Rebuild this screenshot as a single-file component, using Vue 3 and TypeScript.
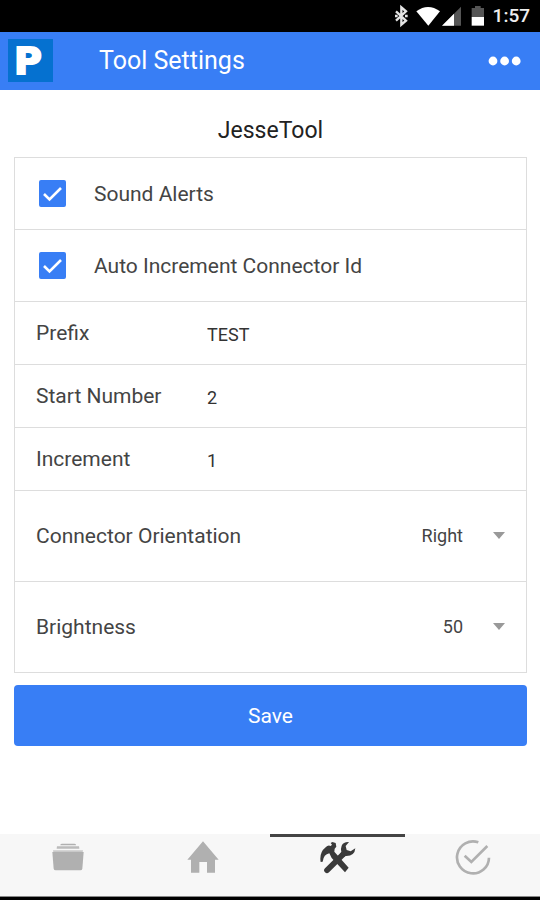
<script setup lang="ts">
import { reactive, ref } from 'vue'

interface Settings {
  sound: boolean
  autoIncrement: boolean
  prefix: string
  start: string
  increment: string
  orientation: string
  brightness: string
}

const settings = reactive<Settings>({
  sound: true,
  autoIncrement: true,
  prefix: 'TEST',
  start: '2',
  increment: '1',
  orientation: 'Right',
  brightness: '50',
})

const toggles: { key: 'sound' | 'autoIncrement'; label: string }[] = [
  { key: 'sound', label: 'Sound Alerts' },
  { key: 'autoIncrement', label: 'Auto Increment Connector Id' },
]
const fields: { key: 'prefix' | 'start' | 'increment'; label: string }[] = [
  { key: 'prefix', label: 'Prefix' },
  { key: 'start', label: 'Start Number' },
  { key: 'increment', label: 'Increment' },
]
const choices: { key: 'orientation' | 'brightness'; label: string; options: string[] }[] = [
  { key: 'orientation', label: 'Connector Orientation', options: ['Right', 'Left'] },
  { key: 'brightness', label: 'Brightness', options: ['25', '50', '75', '100'] },
]

const tabs = ['Files', 'Home', 'Tools', 'Done'] as const
const activeTab = ref<string>('Tools')
</script>

<template>
  <div class="screen">
    <div class="status">
      <svg class="status-icons" viewBox="0 0 321 96" width="107" height="32" aria-hidden="true">
        <path
          d="M48 34L78 62L64 74V22L78 34L48 62"
          fill="none"
          stroke="#e4e4e4"
          stroke-width="7"
        />
        <path d="M45 44h8v8h-8z M75 44h8v8h-8z" fill="#e4e4e4" />
        <path d="M109 34Q144 8 180 34L145 77Z" fill="#fff" />
        <path d="M243 20V77H186Z" fill="#555" />
        <path d="M222 41V77H186Z" fill="#fff" />
        <path d="M275 24h10v-6h17v6h10v27h-37z" fill="#555" />
        <path d="M275 51h37v26h-37z" fill="#fff" />
      </svg>
      <span class="clock">1:57</span>
    </div>

    <header class="toolbar">
      <svg class="logo" viewBox="0 0 45 43" width="45" height="43" aria-hidden="true">
        <rect width="45" height="43" fill="#0571d0" />
        <text x="6" y="35" class="logo-letter">P</text>
      </svg>
      <h1 class="heading">Tool Settings</h1>
      <button class="more" type="button" aria-label="More">
        <svg viewBox="0 0 33 12" width="33" height="12">
          <g fill="#fff">
            <circle cx="5" cy="6" r="4.4" />
            <circle cx="16.6" cy="6" r="4.4" />
            <circle cx="28.2" cy="6" r="4.4" />
          </g>
        </svg>
      </button>
    </header>

    <main class="content">
      <h2 class="tool-name">JesseTool</h2>
      <form class="form" @submit.prevent>
        <div class="panel">
          <label v-for="t in toggles" :key="t.key" class="row toggle">
            <span class="box">
              <input v-model="settings[t.key]" type="checkbox" class="check" />
              <svg v-if="settings[t.key]" class="tick" viewBox="0 0 27 27" width="27" height="27">
                <path d="M5 14L10.5 19.5L22 8" fill="none" stroke="#fff" stroke-width="2.6" />
              </svg>
            </span>
            <span>{{ t.label }}</span>
          </label>

          <div v-for="f in fields" :key="f.key" class="row field">
            <label :for="f.key">{{ f.label }}</label>
            <input :id="f.key" v-model="settings[f.key]" type="text" class="entry" />
          </div>

          <div v-for="c in choices" :key="c.key" class="row choice">
            <label :for="c.key">{{ c.label }}</label>
            <span class="picker">
              <select :id="c.key" v-model="settings[c.key]" class="select">
                <option v-for="o in c.options" :key="o">{{ o }}</option>
              </select>
              <svg class="caret" viewBox="0 0 14 8" width="14" height="8">
                <path d="M1 0H13L7 7Z" fill="#999" />
              </svg>
            </span>
          </div>
        </div>
        <button class="save" type="submit">Save</button>
      </form>
    </main>

    <nav class="tabs">
      <button
        v-for="tab in tabs"
        :key="tab"
        type="button"
        class="tab"
        :class="{ active: tab === activeTab }"
        :aria-label="tab"
        @click="activeTab = tab"
      >
        <svg v-if="tab === 'Files'" viewBox="0 0 108 108" width="36" height="36">
          <g fill="currentColor">
            <path d="M31 14Q32 11 36 11H73Q77 11 78 14V16H31z" />
            <path d="M21 19H87L88 26H20z" opacity=".85" />
            <path d="M9 31H99L98 36H10z" opacity=".65" />
            <path d="M7 36H101L97 86Q96 91 91 91H17Q12 91 11 86Z" />
          </g>
        </svg>
        <svg v-else-if="tab === 'Home'" viewBox="0 0 108 108" width="36" height="36">
          <path
            d="M54 4L101 59H90V98H66V66H43V98H18V59H7L54 4Z"
            fill="currentColor"
          />
        </svg>
        <svg v-else-if="tab === 'Tools'" viewBox="182 44 108 108" width="36" height="36">
          <path d="M203 135L250 88" stroke="currentColor" stroke-width="17" stroke-linecap="round" />
          <path
            d="M269 50Q252 49 247 61Q243 71 246 80L242 85L253 96L259 92Q286 93 288 69L274 78L262 74L259 62Z"
            fill="currentColor"
          />
          <path
            d="M184 110Q179 82 199 66Q206 58 214 62L218 58L214 53L219 50L229 53L231 64L226 70L225 79L268 127L257 141L217 98L210 84Q193 87 190 109Z"
            fill="currentColor"
          />
        </svg>
        <svg v-else viewBox="586 44 108 108" width="36" height="36">
          <g fill="none" stroke="currentColor" stroke-width="8">
            <path d="M656 51A48 48 0 1 0 688 97" />
            <path d="M615 91L635 110L683 62" />
          </g>
        </svg>
      </button>
    </nav>
  </div>
</template>

<style>
body {
  margin: 0;
  background: #fff;
}
</style>

<style scoped>
.screen {
  box-sizing: border-box;
  display: flex;
  flex-direction: column;
  min-height: 100vh;
  border-bottom: 3px solid #000;
  font-family: Roboto, "Liberation Sans", sans-serif;
  color: #444;
}
button,
input,
select {
  font-family: inherit;
  margin: 0;
}
.status {
  display: flex;
  align-items: center;
  justify-content: flex-end;
  gap: 6px;
  height: 32px;
  padding-right: 10px;
  background: #000;
}
.clock {
  color: #eee;
  font-size: 19px;
  font-weight: 500;
  line-height: 32px;
}
.toolbar {
  display: flex;
  align-items: center;
  box-sizing: border-box;
  height: 58px;
  padding: 0 19px 1px 8px;
  background: #387ef5;
}
.logo-letter {
  font: bold 38px "DejaVu Sans", sans-serif;
  fill: #fff;
  stroke: #fff;
  stroke-width: 2px;
}
.heading {
  flex: 1;
  margin: 0 0 0 46px;
  color: #fff;
  font-size: 25px;
  font-weight: 400;
  line-height: 32px;
}
.more {
  display: flex;
  padding: 0;
  border: 0;
  background: none;
}
.content {
  flex: 1;
  padding: 25px 13px 24px 14px;
}
.tool-name {
  margin: 0 0 10px;
  color: #222;
  font-size: 23px;
  font-weight: 400;
  line-height: 32px;
  text-align: center;
}
.form {
  display: flex;
  flex-direction: column;
  gap: 12px;
}
.panel {
  border: 1px solid #ddd;
  border-top: 0;
}
.row {
  display: flex;
  align-items: center;
  box-sizing: border-box;
  padding: 0 20px 0 21px;
  border-top: 1px solid #ddd;
  font-size: 21px;
  line-height: 28px;
}
.toggle {
  gap: 28px;
  height: 72px;
  padding: 0 24px;
}
.box {
  display: grid;
}
.check,
.tick {
  grid-area: 1 / 1;
}
.check {
  width: 27px;
  height: 27px;
  border: 2px solid #387ef5;
  border-radius: 2px;
  appearance: none;
}
.check:checked {
  background: #387ef5;
}
.tick {
  pointer-events: none;
}
.field {
  height: 63px;
}
.field label {
  flex: 0 0 171px;
}
.entry {
  flex: 1;
  min-width: 0;
  padding: 4px 0 0;
  border: 0;
  background: none;
  color: #333;
  font-size: 18px;
  line-height: 24px;
}
.choice {
  justify-content: space-between;
  height: 91px;
}
.picker {
  display: grid;
  align-items: center;
}
.select,
.caret {
  grid-area: 1 / 1;
}
.select {
  padding: 0 43px 0 0;
  border: 0;
  background: none;
  color: #444;
  font-size: 18px;
  line-height: 28px;
  text-align-last: right;
  appearance: none;
}
.caret {
  justify-self: end;
  pointer-events: none;
}
.save {
  height: 61px;
  border: 0;
  border-radius: 4px;
  background: #387ef5;
  color: #fff;
  font-size: 21px;
  line-height: 28px;
}
.tabs {
  display: flex;
  height: 62px;
  border-bottom: 1px solid #888;
  background: #f7f7f7;
}
.tab {
  flex: 1;
  display: flex;
  justify-content: center;
  align-items: flex-start;
  padding: 3px 0 0;
  border: 0;
  border-top: 3px solid transparent;
  background: none;
  color: #b0b0b0;
}
.tab.active {
  border-top-color: #444;
  color: #3a3a3a;
}
</style>
